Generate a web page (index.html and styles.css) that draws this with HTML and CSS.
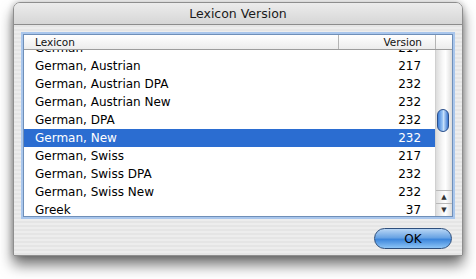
FILE: index.html
```html
<!DOCTYPE html>
<html lang="en">
<head>
    <meta charset="UTF-8">
    <title>Lexicon Version</title>
    <link rel="stylesheet" href="styles.css">
</head>
<body>
<div class="window">
    <div class="titlebar">Lexicon Version</div>
    <div class="content">
        <div class="listbox">
            <div class="header">
                <span class="col-name">Lexicon</span>
                <span class="col-ver">Version</span>
                <span class="col-corner"></span>
            </div>
            <div class="body">
                <div class="rows">
                    <div class="rowlist">
                        <div class="row"><span class="name">German</span><span class="ver">217</span></div>
                        <div class="row"><span class="name">German, Austrian</span><span class="ver">217</span></div>
                        <div class="row"><span class="name">German, Austrian DPA</span><span class="ver">232</span></div>
                        <div class="row"><span class="name">German, Austrian New</span><span class="ver">232</span></div>
                        <div class="row"><span class="name">German, DPA</span><span class="ver">232</span></div>
                        <div class="row selected"><span class="name">German, New</span><span class="ver">232</span></div>
                        <div class="row"><span class="name">German, Swiss</span><span class="ver">217</span></div>
                        <div class="row"><span class="name">German, Swiss DPA</span><span class="ver">232</span></div>
                        <div class="row"><span class="name">German, Swiss New</span><span class="ver">232</span></div>
                        <div class="row"><span class="name">Greek</span><span class="ver">37</span></div>
                    </div>
                </div>
                <div class="scrollbar">
                    <div class="track">
                        <div class="thumb"></div>
                    </div>
                    <div class="arrow">&#9650;</div>
                    <div class="arrow">&#9660;</div>
                </div>
            </div>
        </div>
        <div class="buttons">
            <button class="okbtn">OK</button>
        </div>
    </div>
</div>
</body>
</html>
```

FILE: styles.css
```css
body {
    margin: 0px;
    padding: 0px;
    min-height: 279px;
    background: #ffffff;
    font-family: "DejaVu Sans", "Liberation Sans", sans-serif;
}

.window {
    margin: 2px 0 0 13px;
    width: 448px;
    height: 252px;
    border: 1px solid #8e8e8e;
    border-radius: 7px 7px 0 0;
    background: repeating-linear-gradient(to bottom, #ededed 0px, #ededed 2px, #e5e5e5 2px, #e5e5e5 4px);
    box-shadow: 0 9px 14px rgba(0, 0, 0, 0.55), 0 0 6px rgba(0, 0, 0, 0.25);
    overflow: hidden;
}

.titlebar {
    height: 21px;
    line-height: 21px;
    text-align: center;
    font-size: 12.5px;
    color: #1a1a1a;
    border-bottom: 1px solid #8c8c8c;
    background: linear-gradient(to bottom, #ececec, #d6d6d6);
}

.content {
    padding: 9px 9px 0 9px;
}

.listbox {
    width: 428px;
    border: 1px solid #6f8fb8;
    box-shadow: 0 0 0 2px #a9c6ec;
    background: #ffffff;
}

.header {
    display: flex;
    height: 14px;
    border-bottom: 1px solid #9c9c9c;
    background: linear-gradient(to bottom, #ffffff, #ececec);
    font-size: 10.5px;
    line-height: 15px;
    color: #111111;
}

.col-name {
    width: 303px;
    padding-left: 11px;
    border-right: 1px solid #b4b4b4;
}

.col-ver {
    width: 83px;
    padding-right: 13px;
    text-align: right;
    border-right: 1px solid #b4b4b4;
}

.col-corner {
    flex: 1;
}

.body {
    display: flex;
    height: 166px;
}

.rows {
    width: 412px;
    overflow: hidden;
}

.rowlist {
    margin-top: -11px;
}

.row {
    display: flex;
    height: 18px;
    line-height: 18px;
    font-size: 12px;
    color: #000000;
}

.row .name {
    width: 303px;
    padding-left: 11px;
}

.row .ver {
    width: 84px;
    padding-right: 14px;
    text-align: right;
}

.row.selected {
    background: #2b6dd1;
    color: #ffffff;
}

.scrollbar {
    width: 16px;
    display: flex;
    flex-direction: column;
    border-left: 1px solid #d0d0d0;
    background: linear-gradient(to right, #dcdcdc, #f7f7f7 40%, #ffffff 60%, #dcdcdc);
}

.track {
    flex: 1;
    position: relative;
}

.thumb {
    position: absolute;
    left: 1px;
    top: 59px;
    width: 12px;
    height: 23px;
    border-radius: 6px;
    border: 1px solid #2a4f8c;
    box-sizing: border-box;
    background: linear-gradient(to right, #3f7fd8, #9cc6f5 45%, #c6e0fb 55%, #3b78d2);
}

.arrow {
    height: 12px;
    font-size: 7px;
    line-height: 12px;
    text-align: center;
    color: #333333;
    border-top: 1px solid #b8b8b8;
}

.buttons {
    display: flex;
    justify-content: flex-end;
    padding: 11px 1px 0 0;
}

.okbtn {
    width: 78px;
    height: 21px;
    border: 1px solid #2e4f7c;
    border-radius: 11px;
    background: linear-gradient(to bottom, #b8d6f5 0%, #6aa4e4 45%, #3e87dc 55%, #8cc4f6 100%);
    font-family: "DejaVu Sans", sans-serif;
    font-size: 12px;
    color: #000000;
    padding: 0;
}
```
